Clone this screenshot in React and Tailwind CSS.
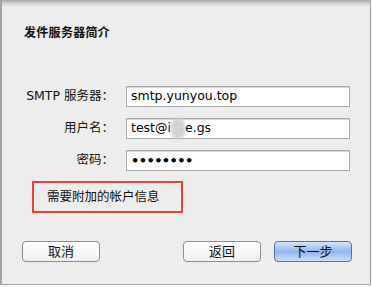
const cjk = "font-['DejaVu_Sans','Noto_Sans_CJK_SC',sans-serif]";

function Field({ label, children }) {
  return (
    <div className="flex items-center h-[21px]">
      <div className="w-[112px] text-right text-[12.5px] text-[#111]">{label}</div>
      <div className="ml-[12px] w-[224px] h-[21px] bg-white border border-[#a9a9a9] shadow-[inset_0_1px_0_#d8d8d8] flex items-center pl-[4px] text-[12.5px] text-black relative">
        {children}
      </div>
    </div>
  );
}

function Button({ children, primary, className }) {
  return (
    <button
      className={
        "h-[21px] w-[78px] rounded-[4px] border text-[13px] leading-none flex items-center justify-center " +
        (primary
          ? "border-[#5a6ea6] bg-gradient-to-b from-[#d6e6fc] via-[#8fb7f2] to-[#c9def9] text-[#111]"
          : "border-[#8d8d8d] bg-gradient-to-b from-[#ffffff] to-[#f0f0f0] text-[#111]") +
        " " +
        className
      }
    >
      {children}
    </button>
  );
}

export default function App() {
  return (
    <div className={"w-[372px] h-[287px] bg-[#f6f6f6] " + cjk}>
      <div className="w-[371px] h-[285px] bg-[#ededed] border-l-2 border-r border-b border-[#a3a3a3] flex flex-col relative">
        <div className="h-[7px] bg-gradient-to-b from-[#a9a9a9] via-[#d3d3d3] to-[#ededed]" />
        <div className="pl-[22px] pt-[17px] text-[12px] font-bold text-[#111] tracking-[0.3px]">
          发件服务器简介
        </div>
        <div className="mt-[44px] flex flex-col gap-[11px]">
          <Field label="SMTP 服务器：">smtp.yunyou.top</Field>
          <Field label="用户名：">
            test@i
            <span className="inline-block w-[14px] h-[21px] rounded-full bg-[#d2d2d2] blur-[1.5px]" />
            e.gs
          </Field>
          <Field label="密码：">
            <span className="text-[13px] tracking-[-0.6px] font-bold">••••••••</span>
          </Field>
        </div>
        <div className="ml-[30px] mt-[10px] w-[151px] h-[32px] border-2 border-[#f33b3b] flex items-center pl-[13px] text-[12.5px] text-[#111]">
          需要附加的帐户信息
        </div>
        <div className="mt-[28px] flex items-center pl-[20px]">
          <Button>取消</Button>
          <Button className="ml-[83px]">返回</Button>
          <Button primary className="ml-[13px]">下一步</Button>
        </div>
      </div>
    </div>
  );
}
